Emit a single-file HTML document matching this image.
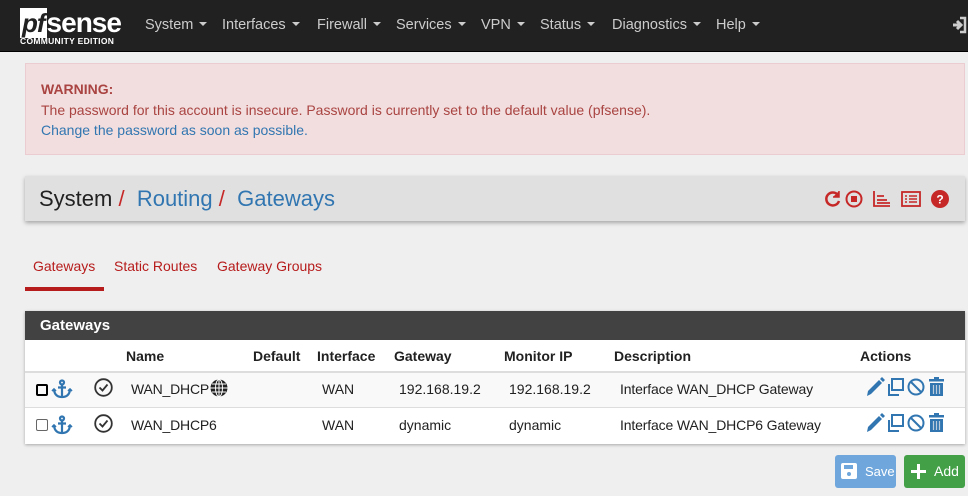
<!DOCTYPE html><html><head><meta charset="utf-8"><style>
*{box-sizing:border-box}body{margin:0;width:968px;height:496px;background:#efefef;font-family:"Liberation Sans",sans-serif;font-size:14px;color:#212121;position:relative;overflow:hidden}
.nav{position:absolute;left:0;top:0;width:968px;height:52px;background:#212121;border-bottom:1px solid #000}
.nav a{position:absolute;top:17px;color:#ccc;font-size:14.5px}
.nav a:after{content:"";display:inline-block;margin-left:6px;border-left:4px solid transparent;border-right:4px solid transparent;border-top:4px solid #ccc;vertical-align:3px}
.logo{position:absolute;left:20px;top:7px;color:#fff}
.warn{position:absolute;left:25px;top:63px;width:940px;height:92px;background:#f2dede;border:1px solid #ebccd1;padding:15px 15px;color:#a94442;font-size:14px;line-height:20.5px}
.bc{position:absolute;left:25px;top:176px;width:940px;height:45px;background:#e0e0e0;box-shadow:0 2px 4px rgba(0,0,0,.3);font-size:22px;padding:10px 14px}
.bc .r{color:#c62828}.bc .b{color:#3176b1}
.tabs{position:absolute;top:258px;font-size:14px;color:#b71c1c}
.panel{position:absolute;left:25px;top:311px;width:940px;height:133px;background:#fff;box-shadow:0 1px 3px rgba(0,0,0,.3)}
.ph{height:29px;background:#424242;color:#fff;font-weight:bold;font-size:15px;padding:6px 15px}
.t{position:absolute;font-size:14px;white-space:nowrap}
.th{font-weight:bold}
.row{position:absolute;left:0;width:940px;height:36px;border-top:1px solid #ddd}
.btn{position:absolute;top:455px;height:33px;border-radius:3px;color:#fff;font-size:13px;white-space:nowrap}
svg{position:absolute}
</style></head><body>
<div class="nav">
<div class="logo"><span style="font-size:26px;font-weight:bold;font-style:italic;background:#fff;color:#212121;padding:0 2px;letter-spacing:-1px">pf</span><span style="font-size:28px;font-weight:bold;letter-spacing:-1px">sense</span><div style="font-size:8.5px;font-weight:bold;margin-top:-3px;letter-spacing:.3px">COMMUNITY EDITION</div></div>
<a style="left:145px">System</a><a style="left:222px">Interfaces</a><a style="left:317px">Firewall</a><a style="left:396px">Services</a><a style="left:481px">VPN</a><a style="left:540px">Status</a><a style="left:612px">Diagnostics</a><a style="left:716px">Help</a>
<svg style="left:951px;top:16px" width="16" height="18" viewBox="0 0 16 18" fill="none" stroke="#ccc" stroke-width="2.5"><path d="M9 2H14V16H9"/><path d="M2 9H10M6 5L10 9L6 13" stroke-width="3"/></svg>
</div>
<div class="warn"><b>WARNING:</b><br>The password for this account is insecure. Password is currently set to the default value (pfsense).<br><span style="color:#3176b1">Change the password as soon as possible.</span></div>
<div class="bc">System <span class="r">/</span>&nbsp; <span class="b">Routing</span> <span class="r">/</span>&nbsp; <span class="b">Gateways</span></div>
<svg style="left:824px;top:189px" width="130" height="20" viewBox="0 0 130 20" fill="none" stroke="#c62828" stroke-width="2.5">
<path d="M14 6A6.5 6.5 0 1 0 15 12"/><path d="M15 2V8H9" fill="#c62828" stroke-width="1.5"/>
<circle cx="30" cy="10" r="7.5" stroke-width="2"/><rect x="27" y="7" width="6" height="6" fill="#c62828" stroke="none"/>
<path d="M50 2V17H66M53 7H60M53 11H63M53 14H66" stroke-width="1.8"/>
<rect x="78" y="3" width="18" height="14" stroke-width="1.8"/><path d="M81 7H83M81 10H83M81 13H83M85 7H93M85 10H93M85 13H93" stroke-width="1.6"/>
<circle cx="116" cy="10" r="9" fill="#c62828" stroke="none"/><text x="116" y="14.5" text-anchor="middle" font-family="Liberation Sans" font-weight="bold" font-size="12" fill="#fff" stroke="none">?</text>
</svg>
<div class="tabs" style="left:33px">Gateways</div><div class="tabs" style="left:114px">Static Routes</div><div class="tabs" style="left:217px">Gateway Groups</div>
<div style="position:absolute;left:25px;top:287px;width:79px;height:4px;background:#b71c1c"></div>
<div class="panel"><div class="ph">Gateways</div>
<div class="t th" style="left:101px;top:37px">Name</div><div class="t th" style="left:228px;top:37px">Default</div><div class="t th" style="left:292px;top:37px">Interface</div><div class="t th" style="left:369px;top:37px">Gateway</div><div class="t th" style="left:479px;top:37px">Monitor IP</div><div class="t th" style="left:589px;top:37px">Description</div><div class="t th" style="left:835px;top:37px">Actions</div>
<div class="row" style="top:60px;background:#f9f9f9;border-top:2px solid #ddd"></div><div class="row" style="top:96px"></div>
<div class="t" style="left:11px;top:73px;width:12px;height:12px;border:2px solid #000;border-radius:2px"></div><div class="t" style="left:11px;top:108px;width:12px;height:12px;border:1px solid #666;border-radius:2px"></div>
<svg style="left:26px;top:68px" width="22" height="20" viewBox="0 0 22 20" fill="none" stroke="#3176b1" stroke-width="2.2"><circle cx="11" cy="3.5" r="2"/><path d="M11 6V18M7 8.5H15M3 11Q4 18 11 18Q18 18 19 11"/><path d="M1 12L3 10L5 12M17 12L19 10L21 12" stroke-width="1.6"/></svg>
<svg style="left:26px;top:104px" width="22" height="20" viewBox="0 0 22 20" fill="none" stroke="#3176b1" stroke-width="2.2"><circle cx="11" cy="3.5" r="2"/><path d="M11 6V18M7 8.5H15M3 11Q4 18 11 18Q18 18 19 11"/><path d="M1 12L3 10L5 12M17 12L19 10L21 12" stroke-width="1.6"/></svg>
<svg style="left:69px;top:67px" width="19" height="19" viewBox="0 0 19 19" fill="none" stroke="#333" stroke-width="1.8"><circle cx="9.5" cy="9.5" r="8.3"/><path d="M5.5 9.5L8.5 12.5L13.5 6.5"/></svg>
<svg style="left:69px;top:103px" width="19" height="19" viewBox="0 0 19 19" fill="none" stroke="#333" stroke-width="1.8"><circle cx="9.5" cy="9.5" r="8.3"/><path d="M5.5 9.5L8.5 12.5L13.5 6.5"/></svg>
<div class="t" style="left:106px;top:70px;letter-spacing:-.2px">WAN_DHCP</div><div class="t" style="left:106px;top:106px;letter-spacing:-.2px">WAN_DHCP6</div>
<svg style="left:185px;top:68px" width="18" height="18" viewBox="0 0 18 18"><circle cx="9" cy="9" r="8.5" fill="#222"/><g fill="none" stroke="#fff" stroke-width="1"><ellipse cx="9" cy="9" rx="3.5" ry="8.5"/><path d="M0.5 9H17.5M9 0.5V17.5M2 5H16M2 13H16"/></g></svg>
<div class="t" style="left:297px;top:70px">WAN</div><div class="t" style="left:297px;top:106px">WAN</div>
<div class="t" style="left:374px;top:70px">192.168.19.2</div><div class="t" style="left:374px;top:106px">dynamic</div>
<div class="t" style="left:484px;top:70px">192.168.19.2</div><div class="t" style="left:484px;top:106px">dynamic</div>
<div class="t" style="left:595px;top:70px;letter-spacing:-.15px">Interface WAN_DHCP Gateway</div><div class="t" style="left:595px;top:106px;letter-spacing:-.15px">Interface WAN_DHCP6 Gateway</div>
<svg style="left:840px;top:65px" width="82" height="22" viewBox="0 0 82 22"><g id="ac"><path d="M2 20L3 15L14 4L17 7L6 18Z M15 3L17 1L20 4L18 6Z" fill="#3176b1"/><g fill="none" stroke="#3176b1" stroke-width="2"><rect x="27" y="3" width="11" height="11"/><path d="M24 8V19H34"/><circle cx="51" cy="11" r="7.5"/><path d="M46 6L56 16"/></g><rect x="64" y="3" width="15" height="2.5" fill="#3176b1"/><rect x="69" y="1" width="5" height="3" fill="#3176b1"/><path d="M65 7H78V20H65Z" fill="#3176b1"/><path d="M68.5 9V18M71.5 9V18M74.5 9V18" stroke="#bcd" stroke-width="1.2"/></g></svg>
<svg style="left:840px;top:101px" width="82" height="22" viewBox="0 0 82 22"><use href="#ac"/></svg>
</div>
<div class="btn" style="left:835px;width:61px;background:#6fa7dc"><svg style="left:6px;top:8px" width="16" height="16" viewBox="0 0 16 16"><rect x="0" y="0" width="16" height="16" rx="2" fill="#fff"/><rect x="3" y="2" width="9" height="4" fill="#6fa7dc"/><circle cx="8" cy="11" r="2" fill="#6fa7dc"/></svg><span style="position:absolute;left:30px;top:9px">Save</span></div>
<div class="btn" style="left:904px;width:61px;background:#43a047"><svg style="left:7px;top:9px" width="15" height="15" viewBox="0 0 15 15"><path d="M7.5 0V15M0 7.5H15" stroke="#fff" stroke-width="3"/></svg><span style="position:absolute;left:30px;top:8px;font-size:14px">Add</span></div>
</body></html>
